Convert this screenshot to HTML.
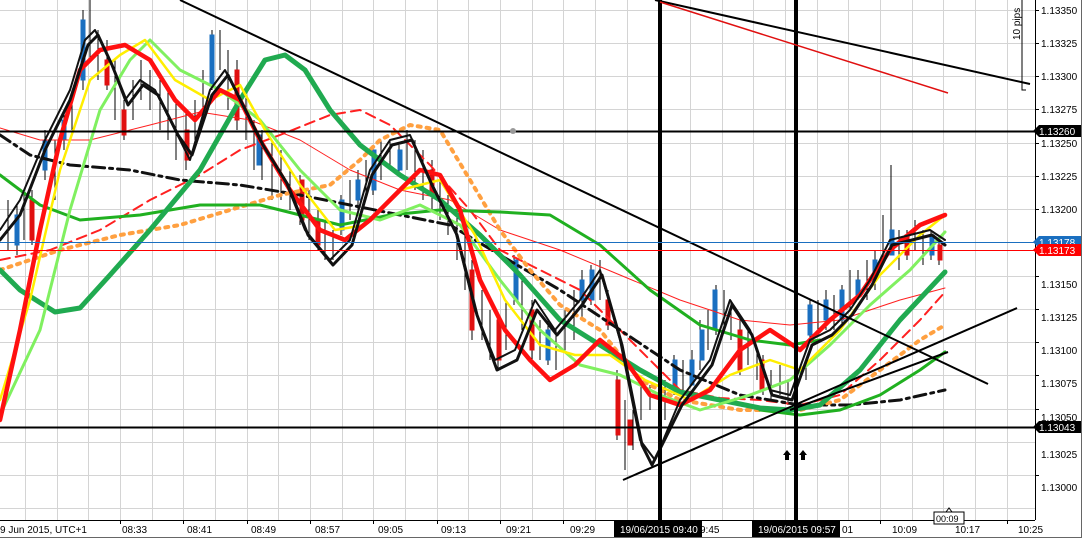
<!DOCTYPE html>
<html><head><meta charset="utf-8"><style>
html,body{margin:0;padding:0;background:#fff;}
svg{display:block;font-family:"Liberation Sans",sans-serif;}
</style></head><body>
<svg width="1082" height="538" viewBox="0 0 1082 538" xmlns="http://www.w3.org/2000/svg">
<rect width="1082" height="538" fill="#fff"/>
<g stroke="#d4d4d4" stroke-width="1">
<path d="M0 10.5H1035M0 43.5H1035M0 76.5H1035M0 109.5H1035M0 143.5H1035M0 176.5H1035M0 209.5H1035M0 242.5H1035M0 276.5H1035M0 309.5H1035M0 342.5H1035M0 375.5H1035M0 409.5H1035M0 442.5H1035M0 475.5H1035M0 508.5H1035"/>
<path d="M25.5 0V520M57.5 0V520M88.5 0V520M120.5 0V520M152.5 0V520M183.5 0V520M215.5 0V520M247.5 0V520M278.5 0V520M310.5 0V520M342.5 0V520M373.5 0V520M405.5 0V520M437.5 0V520M468.5 0V520M500.5 0V520M532.5 0V520M563.5 0V520M595.5 0V520M627.5 0V520M658.5 0V520M690.5 0V520M722.5 0V520M753.5 0V520M785.5 0V520M817.5 0V520M848.5 0V520M880.5 0V520M912.5 0V520M943.5 0V520M975.5 0V520M1007.5 0V520"/>
</g>
<!-- candle wicks -->
<g stroke="#000" stroke-width="1">
<path d="M8 200V250M17 205V255M24 190V240M32 190V245M45 130V180M55 140V200M64 110V150M72 90V130M83 10V90M90 0V60M98 30V80M107 40V90M115 60V120M124 100V140M133 80V120M141 60V100M150 70V110M160 80V130M168 90V140M176 100V160M186 110V170M195 100V140M203 70V120M212 30V90M220 30V70M228 50V110M237 60V130M246 90V140M254 120V170M262 130V180M272 140V200M281 150V200M290 170V210M300 175V225M309 190V240M318 210V250M325 220V260M333 230V260M341 195V235M350 180V220M358 170V210M366 160V200M373 145V195M381 140V180M390 140V170M399 145V175M407 130V170M415 140V190M423 150V200M432 160V210M440 180V220M448 195V235M457 210V260M465 230V290M472 260V340M482 290V340M490 310V360M498 320V370M506 300V350M514 255V305M522 280V330M532 300V360M540 320V360M548 320V365M556 330V370M565 310V350M574 290V340M582 270V320M591 265V305M600 260V300M608 290V330M617 370V440M625 400V470M633 410V450M641 380V420M650 385V410M665 380V420M674 355V395M683 360V390M692 350V385M700 320V370M708 310V350M716 285V335M724 290V325M731 300V340M740 320V375M748 330V365M757 350V380M763 355V395M771 370V400M780 365V395M788 380V405M806 360V380M810 300V340M818 300V335M826 290V330M834 295V330M842 285V325M850 270V310M858 270V300M867 260V300M875 250V290M883 215V260M891 165V250M899 230V270M907 230V260M915 220V250M923 230V265M931 230V260M939 240V265"/>
</g>
<g stroke-width="1">
<g stroke="#1a6fc0" fill="#1a6fc0">
<rect x="15" y="215" width="4" height="30"/><rect x="43" y="140" width="4" height="30"/><rect x="81" y="20" width="4" height="60"/><rect x="62" y="120" width="4" height="20"/><rect x="210" y="35" width="4" height="50"/><rect x="257" y="135" width="4" height="30"/><rect x="340" y="200" width="4" height="30"/><rect x="356" y="180" width="4" height="20"/><rect x="372" y="150" width="4" height="40"/><rect x="398" y="150" width="4" height="20"/><rect x="514" y="260" width="4" height="40"/><rect x="546" y="330" width="4" height="30"/><rect x="580" y="280" width="4" height="20"/><rect x="590" y="270" width="4" height="30"/><rect x="673" y="360" width="4" height="30"/><rect x="690" y="360" width="4" height="25"/><rect x="700" y="330" width="4" height="30"/><rect x="713" y="290" width="4" height="40"/><rect x="808" y="305" width="4" height="30"/><rect x="824" y="300" width="4" height="20"/><rect x="840" y="290" width="4" height="30"/><rect x="856" y="280" width="4" height="15"/><rect x="873" y="260" width="4" height="20"/><rect x="890" y="230" width="4" height="25"/><rect x="930" y="235" width="4" height="20"/>
</g>
<g stroke="#e01010" fill="#e01010">
<rect x="30" y="200" width="4" height="40"/><rect x="105" y="60" width="4" height="25"/><rect x="122" y="110" width="4" height="25"/><rect x="185" y="130" width="4" height="30"/><rect x="235" y="70" width="4" height="50"/><rect x="300" y="180" width="4" height="40"/><rect x="316" y="220" width="4" height="25"/><rect x="430" y="170" width="4" height="25"/><rect x="470" y="270" width="4" height="60"/><rect x="497" y="320" width="4" height="40"/><rect x="530" y="310" width="4" height="40"/><rect x="606" y="300" width="4" height="25"/><rect x="616" y="380" width="4" height="55"/><rect x="628" y="420" width="4" height="25"/><rect x="738" y="330" width="4" height="40"/><rect x="760" y="360" width="4" height="30"/><rect x="905" y="235" width="4" height="20"/><rect x="938" y="245" width="4" height="15"/>
</g>
</g>
<!-- indicator lines -->
<g fill="none" stroke-linejoin="round" stroke-linecap="round">
<polyline stroke="#ff2020" stroke-width="1" points="0,128 40,140 90,140 150,125 200,112 250,120 300,140 350,170 400,190 450,200 500,230 560,250 620,275 680,300 740,320 790,325 840,320 900,300 945,288"/>
<polyline stroke="#ff2020" stroke-width="2" stroke-dasharray="10,6" points="0,260 50,250 100,230 150,200 200,175 240,150 280,135 330,115 360,110 390,125 430,165 470,210 500,250 540,270 580,290 620,330 680,390 720,398 760,400 800,405 840,395 880,360 920,320 945,292"/>
<polyline stroke="#111" stroke-width="3" stroke-dasharray="12,5,3,5" points="0,135 30,155 70,165 130,170 180,180 240,185 300,195 350,205 400,215 450,225 500,255 560,290 620,330 680,370 740,395 800,405 850,405 900,400 945,390"/>
<polyline stroke="#ffa040" stroke-width="4" stroke-dasharray="3,6" points="0,270 60,250 120,235 180,225 230,210 280,195 330,185 360,160 380,140 410,125 440,130 470,180 500,230 530,270 560,305 600,330 640,380 680,400 740,410 800,410 840,400 880,370 920,340 945,325"/>
<polyline stroke="#20b020" stroke-width="3" points="0,175 40,205 80,220 140,215 200,205 260,205 300,215 340,225 390,215 440,210 500,212 550,215 600,245 650,290 700,325 750,340 790,345 820,340"/>
<polyline stroke="#20b020" stroke-width="3" points="760,410 800,415 840,410 880,395 920,370 945,352"/>
<polyline stroke="#20aa50" stroke-width="5" points="0,270 20,290 55,312 80,308 110,275 150,230 200,170 240,100 265,60 285,55 305,70 330,110 360,145 400,175 440,200 480,235 520,275 560,320 600,345 640,370 680,392 720,400 760,408 790,410 820,405 860,370 900,320 945,272"/>
<polyline stroke="#80f060" stroke-width="3" points="0,415 40,330 70,210 100,110 130,60 150,40 180,70 220,90 260,120 300,170 340,210 380,220 420,205 460,225 500,280 540,330 580,365 620,375 660,395 700,410 750,395 790,380 830,345 870,305 910,270 945,232"/>
<polyline stroke="#ffee00" stroke-width="2.5" points="0,400 30,300 60,170 90,80 120,55 145,40 175,80 210,100 240,85 265,130 300,185 335,230 365,225 400,190 440,180 475,235 505,300 540,345 575,355 610,355 645,380 690,400 730,375 770,360 800,370 840,330 880,275 920,235 945,215"/>
<polyline stroke="#ff1010" stroke-width="4.5" points="0,420 20,330 40,230 60,140 80,70 100,50 125,45 150,60 175,100 195,120 220,90 240,100 260,140 290,190 320,230 345,240 370,220 395,195 420,170 440,175 460,210 480,280 505,330 530,360 550,380 575,365 600,340 625,360 650,395 680,405 710,390 740,350 770,330 800,350 830,320 860,295 890,250 920,225 945,215"/>
<polyline stroke="#111" stroke-width="3" points="0,240 20,215 45,150 70,100 88,45 98,35 112,65 128,105 143,85 158,95 178,135 192,155 212,95 228,75 248,115 263,145 288,185 308,235 333,265 352,245 372,175 392,145 412,140 432,185 457,235 477,315 497,370 517,360 537,310 557,335 582,305 602,275 622,345 642,445 652,465 682,405 712,365 732,305 752,335 772,395 792,400 812,345 832,335 852,315 872,285 892,245 912,240 932,235 945,245"/>
<polyline stroke="#111" stroke-width="2" points="0,230 20,200 45,140 70,90 85,40 95,30 110,60 125,100 140,80 155,90 175,130 190,160 210,90 225,70 245,110 260,140 285,180 305,230 330,260 350,240 370,170 390,140 410,135 430,180 455,230 475,310 495,360 515,350 535,300 555,330 580,300 600,270 620,340 640,440 655,460 680,400 710,360 730,300 750,330 770,390 790,395 810,340 830,330 850,310 870,280 890,240 910,235 930,230 945,240"/>
</g>
<!-- drawn objects -->
<g stroke="#000" fill="none">
<line x1="180" y1="0" x2="988" y2="384" stroke-width="2"/>
<line x1="655" y1="0" x2="1030" y2="84" stroke-width="2"/>
<line x1="623" y1="480" x2="1017" y2="308" stroke-width="2"/>
<line x1="790" y1="410" x2="948" y2="352" stroke-width="2"/>
<line x1="0" y1="131.5" x2="1035" y2="131.5" stroke-width="2"/>
<line x1="0" y1="427.5" x2="1035" y2="427.5" stroke-width="2"/>
<line x1="660" y1="0" x2="660" y2="520" stroke-width="4"/>
<line x1="796" y1="0" x2="796" y2="520" stroke-width="4"/>
<path d="M1022 0V90H1026" stroke-width="1"/>
</g>
<line x1="660" y1="2" x2="948" y2="93" stroke="#e01010" stroke-width="1.5"/>
<line x1="0" y1="242.5" x2="1035" y2="242.5" stroke="#1a6fc0" stroke-width="1"/>
<line x1="0" y1="250.5" x2="1035" y2="250.5" stroke="#ff0000" stroke-width="1"/>
<circle cx="513" cy="131" r="3" fill="#999"/>
<text transform="translate(1020,40) rotate(-90)" font-size="10" fill="#000">10 pips</text>
<g fill="#000"><path d="M783 455l4-5 4 5h-2v5h-4v-5z"/><path d="M799 455l4-5 4 5h-2v5h-4v-5z"/></g>
<!-- axes -->
<line x1="1035.5" y1="0" x2="1035.5" y2="520" stroke="#000"/>
<line x1="0" y1="520.5" x2="1035" y2="520.5" stroke="#000"/>
<g stroke="#000"><path d="M1035 10.5h4M1035 43.5h4M1035 76.5h4M1035 109.5h4M1035 143.5h4M1035 176.5h4M1035 209.5h4M1035 276.5h4M1035 309.5h4M1035 342.5h4M1035 375.5h4M1035 409.5h4M1035 475.5h4"/></g>
<g font-size="10" fill="#000">
<text x="1041" y="14">1.13350</text><text x="1041" y="47">1.13325</text><text x="1041" y="80">1.13300</text><text x="1041" y="113">1.13275</text><text x="1041" y="147">1.13250</text><text x="1041" y="180">1.13225</text><text x="1041" y="213">1.13200</text><text x="1041" y="288">1.13150</text><text x="1041" y="321">1.13125</text><text x="1041" y="354">1.13100</text><text x="1041" y="387">1.13075</text><text x="1041" y="421">1.13050</text><text x="1041" y="458">1.13025</text><text x="1041" y="491">1.13000</text>
</g>
<path d="M1033 131l6-6h42v12h-42z" fill="#000"/><text x="1039" y="135" font-size="10" fill="#fff">1.13260</text>
<path d="M1033 242l6-6h42v12h-42z" fill="#1a6fc0"/><text x="1039" y="246" font-size="10" fill="#fff">1.13178</text>
<path d="M1033 250l6-6h42v12h-42z" fill="#ff0000"/><text x="1039" y="254" font-size="10" fill="#fff">1.13173</text>
<path d="M1033 427l6-6h42v12h-42z" fill="#000"/><text x="1039" y="431" font-size="10" fill="#fff">1.13043</text>
<g stroke="#000"><path d="M120.5 520v4M183.5 520v4M247.5 520v4M310.5 520v4M373.5 520v4M437.5 520v4M500.5 520v4M563.5 520v4M627.5 520v4M690.5 520v4M753.5 520v4M817.5 520v4M880.5 520v4M943.5 520v4M1007.5 520v4"/></g>
<g font-size="10" fill="#000">
<text x="0" y="533">9 Jun 2015, UTC+1</text><text x="122" y="533">08:33</text><text x="187" y="533">08:41</text><text x="251" y="533">08:49</text><text x="315" y="533">08:57</text><text x="378" y="533">09:05</text><text x="441" y="533">09:13</text><text x="506" y="533">09:21</text><text x="570" y="533">09:29</text><text x="700" y="533">9:45</text><text x="842" y="533">01</text><text x="892" y="533">10:09</text><text x="955" y="533">10:17</text><text x="1018" y="533">10:25</text>
</g>
<rect x="614" y="521" width="88" height="16" fill="#000"/><text x="620" y="533" font-size="10" fill="#fff">19/06/2015 09:40</text>
<rect x="752" y="521" width="88" height="16" fill="#000"/><text x="758" y="533" font-size="10" fill="#fff">19/06/2015 09:57</text>
<path d="M934 512h30v12h-30zM946 512l3-4 3 4" fill="#fff" stroke="#000"/><text x="936" y="522" font-size="9" fill="#000">00:09</text>
<line x1="1081.5" y1="0" x2="1081.5" y2="538" stroke="#666"/>
<line x1="0" y1="537.5" x2="1082" y2="537.5" stroke="#666"/>
</svg>
</body></html>
